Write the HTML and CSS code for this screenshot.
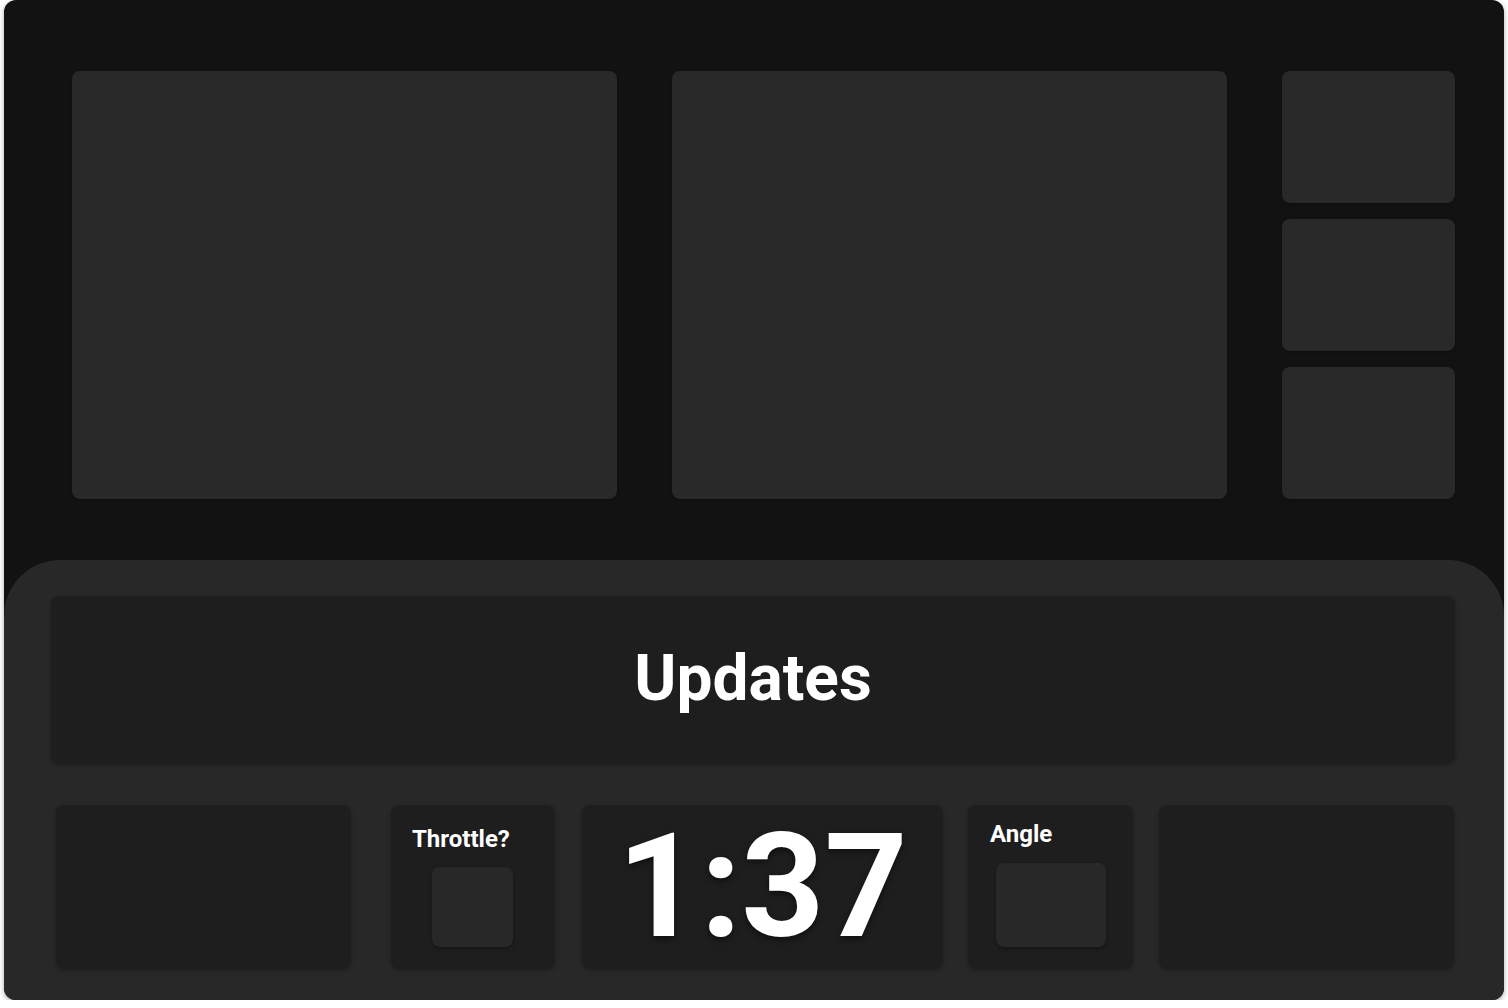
FILE: index.html
```html
<!DOCTYPE html>
<html>
<head>
<meta charset="utf-8">
<link rel="stylesheet" href="styles.css">
</head>
<body>
<div class="frame">
  <div class="top">
    <div class="panel panel-a"></div>
    <div class="panel panel-b"></div>
    <div class="side">
      <div class="panel side-item"></div>
      <div class="panel side-item"></div>
      <div class="panel side-item"></div>
    </div>
  </div>
  <div class="bottom">
    <div class="updates">Updates</div>
    <div class="row">
      <div class="card card-wide"></div>
      <div class="card card-throttle">
        <div class="label">Throttle?</div>
        <div class="inner inner-throttle"></div>
      </div>
      <div class="card card-timer"><span class="timer">1:37</span></div>
      <div class="card card-angle">
        <div class="label label-angle">Angle</div>
        <div class="inner inner-angle"></div>
      </div>
      <div class="card card-wide card-last"></div>
    </div>
  </div>
</div>
</body>
</html>
```

FILE: styles.css
```css
html, body {
  margin: 0;
  padding: 0;
  background: #ffffff;
}
body {
  font-family: Roboto, "Liberation Sans", sans-serif;
}
.frame {
  width: 1500px;
  height: 1000px;
  margin-left: 4px;
  background: #121212;
  border-radius: 12px;
  overflow: hidden;
  box-shadow: 0 2px 5px rgba(0,0,0,0.35);
  display: flex;
  flex-direction: column;
}
.top {
  height: 560px;
  box-sizing: border-box;
  padding: 71px 49px 0 68px;
  display: flex;
  align-items: flex-start;
}
.panel {
  background: #292929;
  border-radius: 8px;
  box-shadow: 0 1px 3px rgba(0,0,0,0.3);
}
.panel-a {
  width: 545px;
  height: 428px;
}
.panel-b {
  width: 555px;
  height: 428px;
  margin-left: 55px;
}
.side {
  margin-left: 55px;
  width: 173px;
  height: 428px;
  display: flex;
  flex-direction: column;
  gap: 16px;
}
.side-item {
  flex: 1;
}
.bottom {
  flex: 1;
  background: #282828;
  border-radius: 56px 56px 0 0;
  padding: 36px 0 0 47px;
  box-sizing: border-box;
}
.updates {
  width: 1404px;
  height: 167px;
  background: #1e1e1e;
  border-radius: 8px;
  box-shadow: 0 2px 4px rgba(0,0,0,0.3);
  display: flex;
  align-items: center;
  justify-content: center;
  color: #ffffff;
  font-weight: 700;
  font-size: 64px;
  padding-bottom: 2px;
  box-sizing: border-box;
}
.row {
  display: flex;
  margin-top: 42px;
  margin-left: 5px;
}
.card {
  height: 163px;
  background: #1e1e1e;
  border-radius: 8px;
  box-shadow: 0 2px 4px rgba(0,0,0,0.3);
  box-sizing: border-box;
}
.card-wide {
  width: 295px;
}
.card-throttle {
  width: 164px;
  margin-left: 40px;
  padding: 20px 0 0 21px;
}
.card-timer {
  width: 361px;
  margin-left: 27px;
  display: flex;
  align-items: center;
  justify-content: center;
}
.card-angle {
  width: 165px;
  margin-left: 25px;
  padding: 15px 0 0 22px;
}
.card-last {
  margin-left: 26px;
}
.label {
  color: #ffffff;
  font-weight: 700;
  font-size: 24px;
  line-height: 28px;
}
.inner {
  background: #282828;
  border-radius: 8px;
  box-shadow: 0 2px 4px rgba(0,0,0,0.3);
}
.inner-throttle {
  width: 81px;
  height: 80px;
  margin: 14px 0 0 20px;
}
.inner-angle {
  width: 110px;
  height: 84px;
  margin: 15px 0 0 6px;
}
.timer {
  color: #ffffff;
  font-weight: 700;
  font-size: 145px;
  line-height: 1;
  text-shadow: 0 3px 6px rgba(0,0,0,0.5);
}
```
